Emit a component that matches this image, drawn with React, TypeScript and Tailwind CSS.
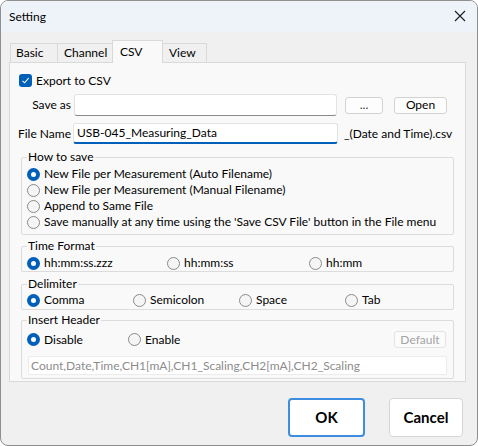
import type { ReactNode } from "react";

const FONT = "font-['Lato','Noto_Sans',sans-serif]";

function Radio({ checked, label, className = "" }: { checked?: boolean; label: string; className?: string }) {
  return (
    <div className={`flex items-center h-[16px] ${className}`}>
      {checked ? (
        <span className="shrink-0 size-[13px] rounded-full bg-[#005fb8] flex items-center justify-center">
          <span className="size-[5px] rounded-full bg-white" />
        </span>
      ) : (
        <span className="shrink-0 size-[13px] rounded-full border border-[#8a8a8a] bg-[#f5f5f5]" />
      )}
      <span className="ml-[4px] whitespace-nowrap">{label}</span>
    </div>
  );
}

function Group({ title, className = "", children }: { title: string; className?: string; children: ReactNode }) {
  return (
    <fieldset className={`ml-[11px] w-[433px] border border-[#dcdcdc] rounded-[2px] ${className}`}>
      <legend className="ml-[5px] px-[1px] leading-[14px]">{title}</legend>
      {children}
    </fieldset>
  );
}

function SmallButton({ text, className = "" }: { text: string; className?: string }) {
  return (
    <button className={`h-[17px] rounded-[3px] border border-[#d3d3d3] bg-[#fdfdfd] text-[12px] leading-[14px] ${className}`}>
      {text}
    </button>
  );
}

export default function App() {
  return (
    <div className={`w-[478px] h-[446px] ${FONT} text-[12px] text-black bg-white`}>
      <div className="w-full h-full rounded-[8px] border border-[#8f8f8f] bg-[#f0f0f0] overflow-hidden flex flex-col">
        {/* title bar */}
        <div className="h-[31px] bg-[#eef3f9] flex items-center justify-between pl-[8px] pr-[11px]">
          <span className="text-[12px]">Setting</span>
          <svg width="12" height="12" viewBox="0 0 12 12" className="mt-[-1px]">
            <path d="M1 1 L11 11 M11 1 L1 11" stroke="#1b1b1b" strokeWidth="1.1" />
          </svg>
        </div>

        <div className="pl-[8px] pr-[11px] pt-[8px]">
          {/* tabs */}
          <div className="flex items-end pl-[1px] h-[22px]">
            <div className="w-[48px] h-[19px] border border-b-0 border-[#d9d9d9] flex items-center pl-[5px]">Basic</div>
            <div className="w-[56px] h-[19px] -ml-px border border-b-0 border-[#d9d9d9] flex items-center pl-[6px]">Channel</div>
            <div className="relative z-10 w-[51px] h-[23px] -ml-px -mb-px border border-b-0 border-[#d9d9d9] bg-[#f9f9f9] flex items-start pt-[2px] pl-[7px]">CSV</div>
            <div className="w-[45px] h-[19px] -ml-px border border-b-0 border-[#d9d9d9] flex items-center pl-[6px]">View</div>
          </div>

          {/* panel */}
          <div className="h-[320px] border border-[#d9d9d9] bg-[#f9f9f9] flex flex-col">
            <div className="mt-[11px] ml-[9px] flex items-center h-[13px]">
              <span className="size-[13px] rounded-[3px] bg-[#005fb8] flex items-center justify-center">
                <svg width="9" height="9" viewBox="0 0 9 9">
                  <path d="M1.5 4.8 L3.6 6.8 L7.6 2.2" fill="none" stroke="white" strokeWidth="1.1" />
                </svg>
              </span>
              <span className="ml-[4px]">Export to CSV</span>
            </div>

            <div className="mt-[7px] flex items-center h-[22px]">
              <span className="w-[61px] text-right">Save as</span>
              <div className="ml-[3px] w-[263px] h-[22px] bg-white border border-[#e3e3e3] border-b-[#8a8a8a] rounded-[3px]" />
              <SmallButton text="..." className="ml-[8px] w-[38px] text-[#333]" />
              <SmallButton text="Open" className="ml-[11px] w-[53px]" />
            </div>

            <div className="mt-[7px] flex items-center h-[21px]">
              <span className="w-[61px] text-right">File Name</span>
              <div className="ml-[2px] w-[265px] h-[21px] bg-white border border-[#e3e3e3] border-b-2 border-b-[#005fb8] rounded-[3px] flex items-center pl-[3px]">
                USB-045_Measuring_Data
              </div>
              <span className="ml-[6px]">_(Date and Time).csv</span>
            </div>

            <Group title="How to save" className="mt-[6px] pb-[4px]">
              <div className="pl-[5px] pt-[2px] flex flex-col">
                <Radio checked label="New File per Measurement (Auto Filename)" />
                <Radio label="New File per Measurement (Manual Filename)" />
                <Radio label="Append to Same File" />
                <Radio label="Save manually at any time using the 'Save CSV File' button in the File menu" />
              </div>
            </Group>

            <Group title="Time Format" className="mt-[4px]">
              <div className="pl-[5px] pt-[2px] flex">
                <Radio checked label="hh:mm:ss.zzz" className="w-[140px]" />
                <Radio label="hh:mm:ss" className="w-[142px]" />
                <Radio label="hh:mm" />
              </div>
            </Group>

            <Group title="Delimiter" className="mt-[5px] pb-[1px]">
              <div className="pl-[5px] pt-[1px] flex">
                <Radio checked label="Comma" className="w-[106px]" />
                <Radio label="Semicolon" className="w-[106px]" />
                <Radio label="Space" className="w-[106px]" />
                <Radio label="Tab" />
              </div>
            </Group>

            <Group title="Insert Header" className="mt-[3px] pb-[3px]">
              <div className="pl-[5px] pr-[7px] pt-[4px] flex items-center">
                <Radio checked label="Disable" className="w-[101px]" />
                <Radio label="Enable" />
                <button className="ml-auto w-[52px] h-[17px] rounded-[3px] border border-[#e3e3e3] bg-[#fbfbfb] text-[#a3a3a3] leading-[14px]">
                  Default
                </button>
              </div>
              <div className="mt-[8px] ml-[6px] w-[419px] h-[19px] bg-white border border-[#ececec] rounded-[2px] flex items-center pl-[2px] text-[#8c8c8c]">
                Count,Date,Time,CH1[mA],CH1_Scaling,CH2[mA],CH2_Scaling
              </div>
            </Group>
          </div>
        </div>

        {/* dialog buttons */}
        <div className="mt-[16px] flex justify-end pr-[14px] gap-[24px]">
          <button className="w-[77px] h-[39px] rounded-[4px] border-2 border-[#3d8ee0] bg-white font-bold text-[15px]">OK</button>
          <button className="w-[74px] h-[39px] rounded-[4px] border border-[#d5d5d5] bg-white font-bold text-[15px]">Cancel</button>
        </div>
      </div>
    </div>
  );
}
